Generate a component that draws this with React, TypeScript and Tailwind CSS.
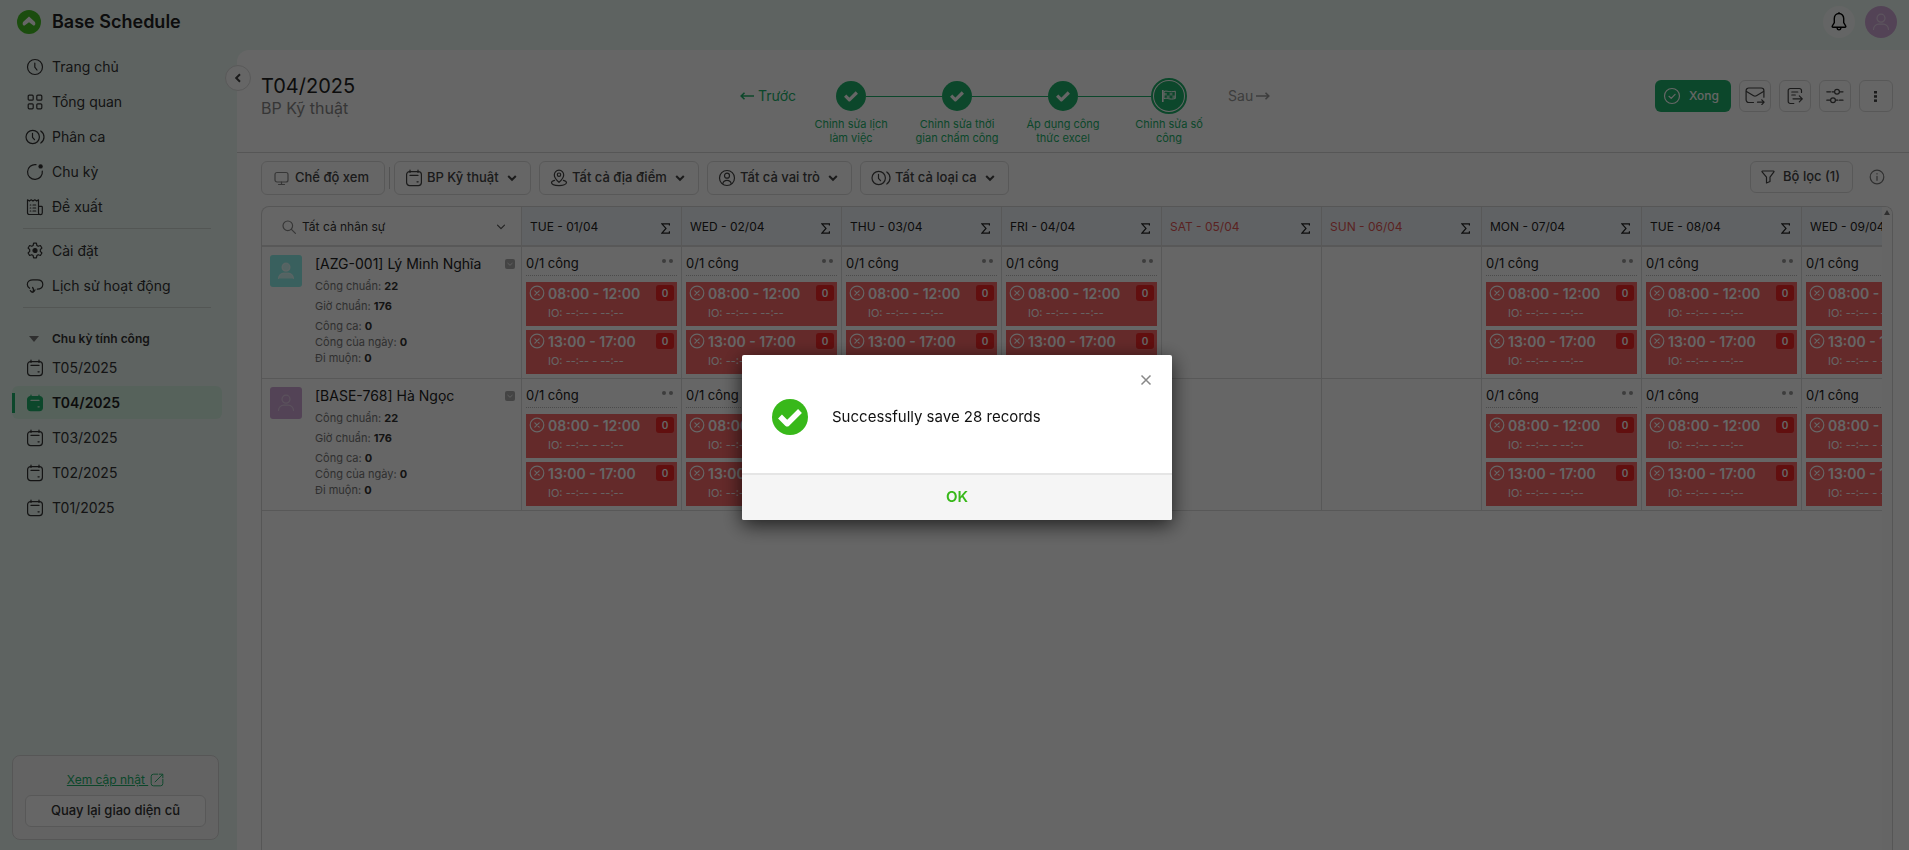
import type { ReactNode } from 'react';

const NAV_MAIN = [
  { label: 'Trang chủ', icon: <ClockIcon /> },
  { label: 'Tổng quan', icon: <GridIcon /> },
  { label: 'Phân ca', icon: <ShiftIcon /> },
  { label: 'Chu kỳ', icon: <CycleIcon /> },
  { label: 'Đề xuất', icon: <ProposalIcon /> },
];

const NAV_SETTINGS = [
  { label: 'Cài đặt', icon: <GearIcon /> },
  { label: 'Lịch sử hoạt động', icon: <HistoryIcon /> },
];

const CYCLES = ['T05/2025', 'T04/2025', 'T03/2025', 'T02/2025', 'T01/2025'];
const CURRENT_CYCLE = 'T04/2025';

const STEPS = ['Chỉnh sửa lịch làm việc', 'Chỉnh sửa thời gian chấm công', 'Áp dụng công thức excel', 'Chỉnh sửa số công'];

const FILTERS = [
  { id: 'department', value: 'BP Kỹ thuật', icon: <CalendarIcon /> },
  { id: 'place', value: 'Tất cả địa điểm', icon: <PlaceIcon /> },
  { id: 'role', value: 'Tất cả vai trò', icon: <RoleIcon /> },
  { id: 'shift', value: 'Tất cả loại ca', icon: <ShiftIcon /> },
];

const DAYS = [
  { label: 'TUE - 01/04' },
  { label: 'WED - 02/04' },
  { label: 'THU - 03/04' },
  { label: 'FRI - 04/04' },
  { label: 'SAT - 05/04', off: true },
  { label: 'SUN - 06/04', off: true },
  { label: 'MON - 07/04' },
  { label: 'TUE - 08/04' },
  { label: 'WED - 09/04' },
];

const SHIFTS = ['08:00 - 12:00', '13:00 - 17:00'];

const EMPLOYEES = [
  { name: '[AZG-001] Lý Minh Nghĩa', avatar: 'bg-[#8ef0ea]', solid: true },
  { name: '[BASE-768] Hà Ngọc', avatar: 'bg-[#cfa8d6]', solid: false },
];

/* ---------- icons ---------- */

function Svg({ children, className = 'size-[18px]', box = '0 0 18 18' }: { children: ReactNode; className?: string; box?: string }) {
  return (
    <svg
      className={`shrink-0 ${className}`}
      viewBox={box}
      fill="none"
      stroke="currentColor"
      strokeWidth="1.2"
      strokeLinecap="round"
      strokeLinejoin="round"
      aria-hidden="true"
    >
      {children}
    </svg>
  );
}

function ClockIcon() {
  return (
    <Svg>
      <circle cx="9" cy="9" r="7.5" />
      <path d="M8.8 5v4.2l2.2 2.8" />
    </Svg>
  );
}

function GridIcon() {
  return (
    <Svg>
      <rect x="2.2" y="2.2" width="5" height="5" rx="1" />
      <rect x="10.8" y="2.2" width="5" height="5" rx="1" />
      <rect x="2.2" y="10.8" width="5" height="5" rx="1" />
      <rect x="10.8" y="10.8" width="5" height="5" rx="1" />
    </Svg>
  );
}

function ShiftIcon() {
  return (
    <Svg className="h-[18px] w-5" box="0 0 20 18">
      <circle cx="7.7" cy="9" r="6.7" />
      <path d="M7.5 5.3v4l2 2.4M15.8 3c2 1.4 3.2 3.5 3.2 6s-1.2 4.6-3.2 6" />
    </Svg>
  );
}

function CycleIcon() {
  return (
    <Svg>
      <path d="M10 1.7a7.4 7.4 0 1 0 6.3 6.3" />
      <circle cx="14.6" cy="3.4" r="2.2" fill="currentColor" stroke="none" />
    </Svg>
  );
}

function ProposalIcon() {
  return (
    <Svg>
      <path d="M14.500 16.500H3.200A1.700 1.700 0 0 1 1.500 14.800V1.800l1.900 1.300 1.800-1.300L7 3.100l1.800-1.300 1.900 1.300 1.800-1.300v13a1.900 1.900 0 0 0 3.800 0V9.200a.8.8 0 0 0-.8-.8h-3" />
      <path d="M4.200 7h.6M7 7h2.700M4.200 10h.6M7 10h2.700M4.200 13h.6M7 13h2.700" />
    </Svg>
  );
}

function GearIcon() {
  return (
    <Svg>
      <path d="M7.600 1.200h2.800l.5 2.300 1.300.8 2.200-.8 1.500 2.500-1.600 1.600v1.800l1.600 1.600-1.500 2.500-2.200-.8-1.300.8-.5 2.300H7.600l-.5-2.300-1.300-.8-2.200.8L2.100 11l1.600-1.600V7.600L2.100 6l1.500-2.500 2.200.8 1.300-.8z" />
      <circle cx="9" cy="8.500" r="2" fill="currentColor" />
    </Svg>
  );
}

function HistoryIcon() {
  return (
    <Svg>
      <path d="M3.600 11.300C2.200 10.400 1.300 9.200 1.300 7.500c0-3 2.600-4.700 5.700-4.700h4.300c3.100 0 5.500 1.700 5.500 4.700s-2.400 4.700-5.500 4.700" />
      <path d="M6.600 10.500c1 1.100 1.200 2.700.4 4.800M4.300 13.600c.7 1 1.600 1.600 2.700 1.700 1-.6 1.700-1.400 2-2.500" />
    </Svg>
  );
}

function CalendarIcon({ filled = false }: { filled?: boolean }) {
  return (
    <Svg>
      <rect x="1.600" y="2.600" width="14.800" height="14" rx="3" fill={filled ? 'currentColor' : 'none'} />
      <path d="M5 1v2.500M13 1v2.500" />
      <path d="M5 6.400h8M12 12.800h1.200" className={filled ? 'stroke-[#d7f5e4]' : ''} />
    </Svg>
  );
}

function PlaceIcon() {
  return (
    <Svg>
      <path d="M9 13.300C6.400 10.900 4.300 8.700 4.300 5.900a4.700 4.700 0 0 1 9.400 0c0 2.800-2.100 5-4.700 7.400z" />
      <circle cx="9" cy="5.700" r="1.700" />
      <path d="M4.600 11.300c-1.900.5-3.100 1.300-3.100 2.300 0 1.800 3.500 3 7.500 3s7.500-1.200 7.500-3c0-1-1.200-1.800-3.100-2.300" />
    </Svg>
  );
}

function RoleIcon() {
  return (
    <Svg>
      <circle cx="9" cy="9" r="7.500" />
      <circle cx="9" cy="6.700" r="2.500" />
      <path d="M4.800 14.600c.5-2.100 2-3.300 4.200-3.300s3.700 1.200 4.200 3.300" />
    </Svg>
  );
}

function PersonIcon({ solid = false, className = 'size-[18px]' }: { solid?: boolean; className?: string }) {
  return (
    <Svg className={className}>
      <circle cx="9" cy="5.200" r="4" fill={solid ? 'currentColor' : 'none'} />
      <path d="M1.500 16.500c0-3.300 2.600-5.300 5.200-5.300h4.600c2.600 0 5.200 2 5.200 5.300" fill={solid ? 'currentColor' : 'none'} />
    </Svg>
  );
}

function ChevronIcon({ className = 'size-[10px]' }: { className?: string }) {
  return (
    <svg className={`pointer-events-none shrink-0 ${className}`} viewBox="0 0 10 10" fill="none" stroke="currentColor" strokeWidth="2" aria-hidden="true">
      <path d="M1.200 3l3.800 3.800L8.800 3" />
    </svg>
  );
}

function CheckIcon({ className }: { className: string }) {
  return (
    <svg className={className} viewBox="0 0 24 24" fill="none" stroke="currentColor" strokeWidth="5.500" strokeLinejoin="round" aria-hidden="true">
      <path d="M2 11.500l7.200 7.200L22 6" />
    </svg>
  );
}

/* ---------- page parts ---------- */

function NavItem({ label, icon, active = false }: { label: string; icon: ReactNode; active?: boolean }) {
  return (
    <li>
      <a
        href="#"
        className={`relative flex h-[33px] items-center rounded-md text-sm ${active ? 'bg-[#d7f5e4] font-semibold text-[#222]' : 'text-[#333]'}`}
      >
        {active && <span className="absolute left-0 h-5 w-[3px] bg-[#20b26b]" />}
        <span className={`ml-3 flex w-[22px] justify-center ${active ? 'text-[#20b26b]' : ''}`}>{icon}</span>
        <span className="ml-[6px]">{label}</span>
      </a>
    </li>
  );
}

function Sidebar() {
  return (
    <aside className="flex w-[237px] shrink-0 flex-col pr-[15px] pl-3">
      <nav className="flex-1">
        <ul className="flex flex-col gap-[2px]">
          {NAV_MAIN.map((item) => (
            <NavItem key={item.label} {...item} />
          ))}
        </ul>
        <hr className="mx-[11px] my-[5px] border-[#cfd6d3]" />
        <ul className="flex flex-col gap-[2px]">
          {NAV_SETTINGS.map((item) => (
            <NavItem key={item.label} {...item} />
          ))}
        </ul>
        <hr className="mx-[11px] mt-[5px] mb-5 border-[#cfd6d3]" />
        <button type="button" className="flex h-[22px] items-center text-xs font-semibold text-[#333]">
          <svg className="ml-[17px] h-[6px] w-[10px] text-[#777]" viewBox="0 0 10 6" fill="currentColor" aria-hidden="true">
            <path d="M0 0h10L5 6z" />
          </svg>
          <span className="ml-[13px]">Chu kỳ tính công</span>
        </button>
        <ul className="mt-px flex flex-col gap-[2px]">
          {CYCLES.map((cycle) => (
            <NavItem key={cycle} label={cycle} active={cycle === CURRENT_CYCLE} icon={<CalendarIcon filled={cycle === CURRENT_CYCLE} />} />
          ))}
        </ul>
      </nav>

      <div className="mr-[3px] mb-[10px] flex flex-col items-center rounded-lg border border-[#d8d8d8] bg-[#f8f8f8] px-3 pt-4 pb-3">
        <a href="#" className="flex items-center gap-[2px] text-xs leading-4 text-[#20b26b]">
          <span className="underline">Xem cập nhật&nbsp;</span>
          <Svg className="size-[14px]">
            <path d="M10 1.500H4.500a3 3 0 0 0-3 3v9a3 3 0 0 0 3 3h9a3 3 0 0 0 3-3V8M6.500 11.500l9.500-9.500M12 1.500h4.500V6" />
          </Svg>
        </a>
        <button type="button" className="mt-[7px] h-8 w-full rounded-md border border-[#ddd] bg-white text-[13px] font-medium text-[#333]">
          Quay lại giao diện cũ
        </button>
      </div>
    </aside>
  );
}

function TopBar() {
  return (
    <header className="flex h-[50px] shrink-0 items-center justify-between pr-3 pb-[7px] pl-[17px]">
      <a href="#" className="flex items-center gap-[11px] text-lg font-semibold text-[#222]">
        <svg className="size-6" viewBox="0 0 24 24" aria-hidden="true">
          <circle cx="12" cy="12" r="12" fill="#45c024" />
          <path d="M12 6.500l6 5.600c.9 2.300 0 3.900-1.600 3.500L12 12.200l-4.400 3.400c-1.600.4-2.500-1.200-1.600-3.500z" fill="#fff" />
        </svg>
        Base Schedule
      </a>
      <div className="flex items-center gap-[10px]">
        <button type="button" aria-label="Thông báo" className="flex size-8 items-center justify-center rounded-full bg-white/70 text-black">
          <svg className="h-[19px] w-4" viewBox="0 0 16 19" fill="none" stroke="currentColor" strokeWidth="1.400" strokeLinejoin="round" aria-hidden="true">
            <path d="M8 1.500c-2.800 0-4.700 2.200-4.700 5v4.200L1.300 14c-.3.700 0 1.300.8 1.300h11.800c.8 0 1.100-.6.800-1.300l-2-3.300V6.500c0-2.800-1.900-5-4.700-5z" />
            <path d="M6 16c.3 1.300 1 1.900 2 1.900s1.700-.6 2-1.900M8 .200v1.300" />
          </svg>
        </button>
        <button type="button" aria-label="Tài khoản" className="flex size-8 items-center justify-center rounded-full bg-[#cfa8d6] text-[#e6d2ea]">
          <PersonIcon />
        </button>
      </div>
    </header>
  );
}

function Steps() {
  return (
    <div className="flex items-start text-sm text-[#20b26b]">
      <button type="button" className="mr-[2px] flex h-9 items-center gap-1">
        <svg className="w-[14px]" viewBox="0 0 14 8" fill="none" stroke="currentColor" strokeWidth="1.600" aria-hidden="true">
          <path d="M14 4H1M4.500.8L1.200 4l3.300 3.200" />
        </svg>
        Trước
      </button>
      <ol className="flex">
        {STEPS.map((step, i) => {
          const last = i === STEPS.length - 1;
          return (
            <li key={step} className="flex w-[106px] flex-col items-center">
              <div className="flex h-9 w-full items-center">
                <span className={`h-px flex-1 ${i === 0 ? '' : 'bg-[#20b26b]'}`} />
                {last ? (
                  <span className="flex size-9 items-center justify-center rounded-full border-2 border-[#20b26b]">
                    <span className="flex size-[30px] items-center justify-center rounded-full bg-[#20b26b] text-white">
                      <svg className="h-3 w-[14px]" viewBox="0 0 14 12" fill="none" stroke="currentColor" aria-hidden="true">
                        <path d="M.800 0v12" strokeWidth="1.600" />
                        <path d="M2 1.500c3-1.300 5 1.300 11.300-.3v7.300c-6 1.700-8-1.200-11.300.2z" />
                        <path d="M2 3h2.800v2.600H2zM4.800 5.600h2.800v2.600H4.800zM7.600 3h2.800v2.600H7.600zM10.400 5.600h2.800v2.600h-2.800z" fill="currentColor" fillOpacity=".6" stroke="none" />
                      </svg>
                    </span>
                  </span>
                ) : (
                  <span className="flex size-[30px] items-center justify-center rounded-full bg-[#20b26b] text-white">
                    <CheckIcon className="size-[14px]" />
                  </span>
                )}
                <span className={`h-px flex-1 ${last ? '' : 'bg-[#20b26b]'}`} />
              </div>
              <span className="mt-[3px] w-[86px] text-center text-[11px] leading-[14px]">{step}</span>
            </li>
          );
        })}
      </ol>
      <button type="button" className="ml-[6px] flex h-9 items-center gap-[3px] text-[#999]">
        Sau
        <svg className="w-[14px]" viewBox="0 0 14 8" fill="none" stroke="currentColor" strokeWidth="1.600" aria-hidden="true">
          <path d="M0 4h13M9.500.8L12.800 4 9.500 7.200" />
        </svg>
      </button>
    </div>
  );
}

function IconButton({ label, children, className = 'w-8' }: { label: string; children: ReactNode; className?: string }) {
  return (
    <button
      type="button"
      aria-label={label}
      className={`flex h-8 items-center justify-center rounded-md border border-[#ddd] text-[#444] ${className}`}
    >
      {children}
    </button>
  );
}

function PageHeader() {
  return (
    <div className="flex items-start justify-between border-b border-[#d8d8d8] pt-6 pr-4 pb-[7px] pl-6">
      <div>
        <h1 className="text-xl leading-6 text-[#222]">T04/2025</h1>
        <p className="text-base leading-5 text-[#888]">BP Kỹ thuật</p>
      </div>
      <div className="pt-1">
        <Steps />
      </div>
      <div className="flex gap-2 pt-[6px]">
        <button type="button" className="flex h-8 items-center gap-2 rounded-md bg-[#20b26b] pr-3 pl-2 text-xs font-medium text-white">
          <Svg>
            <circle cx="9" cy="9" r="7.500" />
            <path d="M6 9.300l2.200 2.100 3.900-4" />
          </Svg>
          Xong
        </button>
        <IconButton label="Gửi thư">
          <Svg className="h-[18px] w-5" box="0 0 20 18">
            <path d="M8.500 15.500H3.800A2.700 2.700 0 0 1 1.100 12.800V3.700A2.700 2.700 0 0 1 3.800 1h12.400a2.700 2.700 0 0 1 2.700 2.700v6.500" />
            <path d="M1.500 4.500L8.600 8.700a2.800 2.800 0 0 0 2.800 0l7.100-4.200M12.500 15.200h6.500M16.800 12.800l2.300 2.400-2.300 2.400" />
          </Svg>
        </IconButton>
        <IconButton label="Xuất dữ liệu">
          <Svg>
            <path d="M15.500 5.500V3.600A2.100 2.100 0 0 0 13.400 1.500H4.300A2.100 2.100 0 0 0 2.200 3.600v10.800a2.100 2.100 0 0 0 2.100 2.100h3.500" />
            <path d="M5.800 5h6M5.800 8h3.500M7 11.800h9M13.300 8.800l3 3-3 3" />
          </Svg>
        </IconButton>
        <IconButton label="Tùy chỉnh">
          <Svg>
            <path d="M.8 4.800h3.700M6 4.800h2.300M13.700 4.800H17M.8 13.200h3.500M9.700 13.200h2.300M13.500 13.200H17" />
            <circle cx="11" cy="4.800" r="2.400" />
            <circle cx="7" cy="13.200" r="2.400" />
          </Svg>
        </IconButton>
        <IconButton label="Thêm" className="w-[34px]">
          <svg className="h-[11px] w-[3px]" viewBox="0 0 3 11" fill="currentColor" aria-hidden="true">
            <rect width="3" height="2.500" />
            <rect y="4.200" width="3" height="2.500" />
            <rect y="8.400" width="3" height="2.500" />
          </svg>
        </IconButton>
      </div>
    </div>
  );
}

function FilterBar() {
  return (
    <div className="flex items-start justify-between pt-2 pr-4 pl-6 text-[13px] font-medium text-[#444]">
      <div className="flex items-center gap-1">
        <button type="button" className="flex h-[34px] w-[124px] items-center gap-[6px] rounded-md border border-[#ddd] pl-3">
          <Svg className="size-[15px] text-[#888]" box="0 0 15 15">
            <rect x="1" y="1.500" width="13" height="9.500" rx="2" />
            <path d="M4.500 13.500h6M7.500 11v2.500" />
          </Svg>
          Chế độ xem
        </button>
        <span className="h-[22px] w-px bg-[#ccc]" />
        <div className="flex gap-2">
          {FILTERS.map((filter) => (
            <label key={filter.id} htmlFor={filter.id} className="flex h-[34px] items-center rounded-md border border-[#ddd] pr-[13px] pl-[10px]">
              {filter.icon}
              <select id={filter.id} aria-label={filter.value} className="ml-1 appearance-none outline-none">
                <option>{filter.value}</option>
              </select>
              <ChevronIcon className="ml-2 size-[10px]" />
            </label>
          ))}
        </div>
      </div>
      <div className="flex items-center gap-4">
        <button type="button" className="flex h-8 items-center gap-2 rounded-md border border-[#ddd] pr-3 pl-[10px]">
          <Svg className="size-[14px]" box="0 0 14 14">
            <path d="M1.500 1h11c.5 0 .7.500.4.900L9 7.200v4.300L5.500 13V7.200L1.100 1.900C.8 1.500 1 1 1.500 1z" />
          </Svg>
          Bộ lọc (1)
        </button>
        <button type="button" aria-label="Thông tin" className="mr-2 text-[#777]">
          <Svg className="size-4" box="0 0 16 16">
            <circle cx="8" cy="8" r="6.800" />
            <path d="M8 7.300v4M8 4.700v.300" />
          </Svg>
        </button>
      </div>
    </div>
  );
}

function ShiftCard({ time }: { time: string }) {
  return (
    <div className="flex h-11 items-start bg-[#f96969] pt-[3px] pr-[3px] pl-[3px] text-white">
      <Svg className="size-4" box="0 0 16 16">
        <circle cx="8" cy="8" r="6.800" />
        <path d="M5.800 5.800l4.400 4.400M10.200 5.800l-4.400 4.400" />
      </Svg>
      <div className="ml-[3px] flex-1">
        <div className="text-sm leading-[18px] font-semibold">{time}</div>
        <div className="text-[11px] leading-5">IO: --:-- - --:--</div>
      </div>
      <span className="flex h-4 w-[18px] items-center justify-center rounded-[3px] bg-[#f22626] text-[10px] font-semibold">0</span>
    </div>
  );
}

function DayCell() {
  return (
    <div className="flex flex-col px-1 pb-1">
      <div className="flex h-[29px] items-start justify-between border-b border-dotted border-[#bbb] pt-[6px] pr-1 text-[13px] leading-5 text-[#222]">
        0/1 công
        <span className="flex gap-[3px] pt-[6px]">
          <i className="size-1 rounded-full bg-[#999]" />
          <i className="size-1 rounded-full bg-[#999]" />
        </span>
      </div>
      <div className="mt-[6px] flex flex-col gap-1">
        {SHIFTS.map((time) => (
          <ShiftCard key={time} time={time} />
        ))}
      </div>
    </div>
  );
}

function EmployeeCell({ name, avatar, solid }: { name: string; avatar: string; solid: boolean }) {
  return (
    <div className="flex items-start pt-2 pr-[6px] pl-2">
      <span className={`flex size-8 shrink-0 items-center justify-center rounded-[3px] ${avatar} ${solid ? 'text-white/60' : 'text-white/40'}`}>
        <PersonIcon solid={solid} />
      </span>
      <div className="ml-[13px] flex-1 text-[11px] leading-4 text-[#777]">
        <div className="text-sm leading-[18px] text-[#222]">{name}</div>
        <div className="mt-[5px]">Công chuẩn: <b className="text-[#333]">22</b></div>
        <div className="my-1">Giờ chuẩn: <b className="text-[#333]">176</b></div>
        <div>Công ca: <b className="text-[#333]">0</b></div>
        <div>Công của ngày: <b className="text-[#333]">0</b></div>
        <div>Đi muộn: <b className="text-[#333]">0</b></div>
      </div>
      <button type="button" aria-label="Mở rộng" className="mt-1 flex size-[10px] items-center justify-center rounded-[2px] bg-[#aaa] text-[#eee]">
        <svg className="size-2" viewBox="0 0 8 8" fill="none" stroke="currentColor" aria-hidden="true">
          <path d="M1.500 3L4 5.300 6.500 3" />
        </svg>
      </button>
    </div>
  );
}

function ScheduleTable() {
  return (
    <div className="mt-[11px] mr-4 ml-6 flex min-h-0 flex-1 overflow-hidden rounded-t-lg border border-b-0 border-[#d8d8d8]">
      <div className="min-w-0 flex-1 overflow-hidden">
        <table className="w-[1700px] table-fixed border-separate border-spacing-0 text-left">
          <thead>
            <tr>
              <th className="h-10 w-[260px] border-r border-b-2 border-[#ddd] p-0 pt-[2px] font-normal">
                <label htmlFor="staff" className="flex items-center pr-[15px] pl-5 text-[#333]">
                  <Svg className="size-[14px] text-[#888]" box="0 0 14 14">
                    <circle cx="5.800" cy="5.800" r="4.800" />
                    <path d="M9.400 9.400l4 4" />
                  </Svg>
                  <select id="staff" aria-label="Tất cả nhân sự" className="ml-[6px] flex-1 appearance-none text-xs outline-none">
                    <option>Tất cả nhân sự</option>
                  </select>
                  <Svg className="pointer-events-none size-[10px] text-[#555]" box="0 0 10 10">
                    <path d="M1.500 3.200L5 6.700l3.500-3.500" />
                  </Svg>
                </label>
              </th>
              {DAYS.map((day) => (
                <th key={day.label} className="h-10 w-40 border-r border-b-2 border-[#ddd] bg-[#f1f5f9] p-0 pt-[2px] font-normal">
                  <div className={`flex items-center justify-between pr-[11px] pl-2 text-xs ${day.off ? 'text-[#e25555]' : 'text-[#222]'}`}>
                    {day.label}
                    <svg className="mt-[2px] h-[11px] w-[9px] text-[#222]" viewBox="0 0 9 11" fill="none" stroke="currentColor" strokeWidth="1.200" aria-hidden="true">
                      <path d="M8.400 2.600V.8H.9L5 5.400.9 10.200h7.500V8.300" />
                    </svg>
                  </div>
                </th>
              ))}
            </tr>
          </thead>
          <tbody>
            {EMPLOYEES.map((employee) => (
              <tr key={employee.name}>
                <td className="border-r border-b border-[#ddd] p-0 align-top">
                  <EmployeeCell {...employee} />
                </td>
                {DAYS.map((day) => (
                  <td key={day.label} className="border-r border-b border-[#ddd] p-0 align-top">
                    {!day.off && <DayCell />}
                  </td>
                ))}
              </tr>
            ))}
          </tbody>
        </table>
      </div>
      <div className="w-[10px] shrink-0 bg-[#fcfcfc] pt-[3px]">
        <svg className="mx-auto h-[5px] w-[6px] text-[#777]" viewBox="0 0 6 5" fill="currentColor" aria-hidden="true">
          <path d="M3 0l3 5H0z" />
        </svg>
      </div>
    </div>
  );
}

function SuccessDialog() {
  return (
    <div className="fixed inset-0 flex items-center justify-center bg-black/60 pt-[25px] pl-[5px]">
      <div role="dialog" aria-modal="true" aria-labelledby="dialog-message" className="relative w-[430px] rounded-[2px] bg-white shadow-[0_5px_20px_rgba(0,0,0,0.7)]">
        <button type="button" aria-label="Đóng" className="absolute top-[19px] right-5 text-[#888]">
          <svg className="size-3" viewBox="0 0 12 12" fill="none" stroke="currentColor" strokeWidth="1.500" aria-hidden="true">
            <path d="M1.500 1.500l9 9M10.500 1.500l-9 9" />
          </svg>
        </button>
        <div className="flex h-[118px] items-center gap-6 pt-[6px] pl-[30px]">
          <span className="flex size-9 items-center justify-center rounded-full bg-[#38b81a] text-white">
            <CheckIcon className="size-6" />
          </span>
          <p id="dialog-message" className="text-[15px] text-[#111]">Successfully save 28 records</p>
        </div>
        <button type="button" className="h-[47px] w-full rounded-b-[2px] border-t-2 border-[#e5e5e5] bg-[#f5f5f5] text-[15px] font-semibold text-[#38b81a]">
          OK
        </button>
      </div>
    </div>
  );
}

export default function App() {
  return (
    <div className="flex h-screen flex-col overflow-hidden bg-[#ecf8f3] font-['Inter',sans-serif]">
      <TopBar />
      <div className="flex min-h-0 flex-1">
        <Sidebar />
        <main className="relative flex min-w-0 flex-1 flex-col rounded-tl-xl bg-white">
          <button
            type="button"
            aria-label="Thu gọn"
            className="absolute top-[15px] -left-3 flex size-[26px] items-center justify-center rounded-full border border-[#ddd] bg-white text-[#444]"
          >
            <ChevronIcon className="size-[10px] rotate-90" />
          </button>
          <PageHeader />
          <FilterBar />
          <ScheduleTable />
        </main>
      </div>
      <SuccessDialog />
    </div>
  );
}
